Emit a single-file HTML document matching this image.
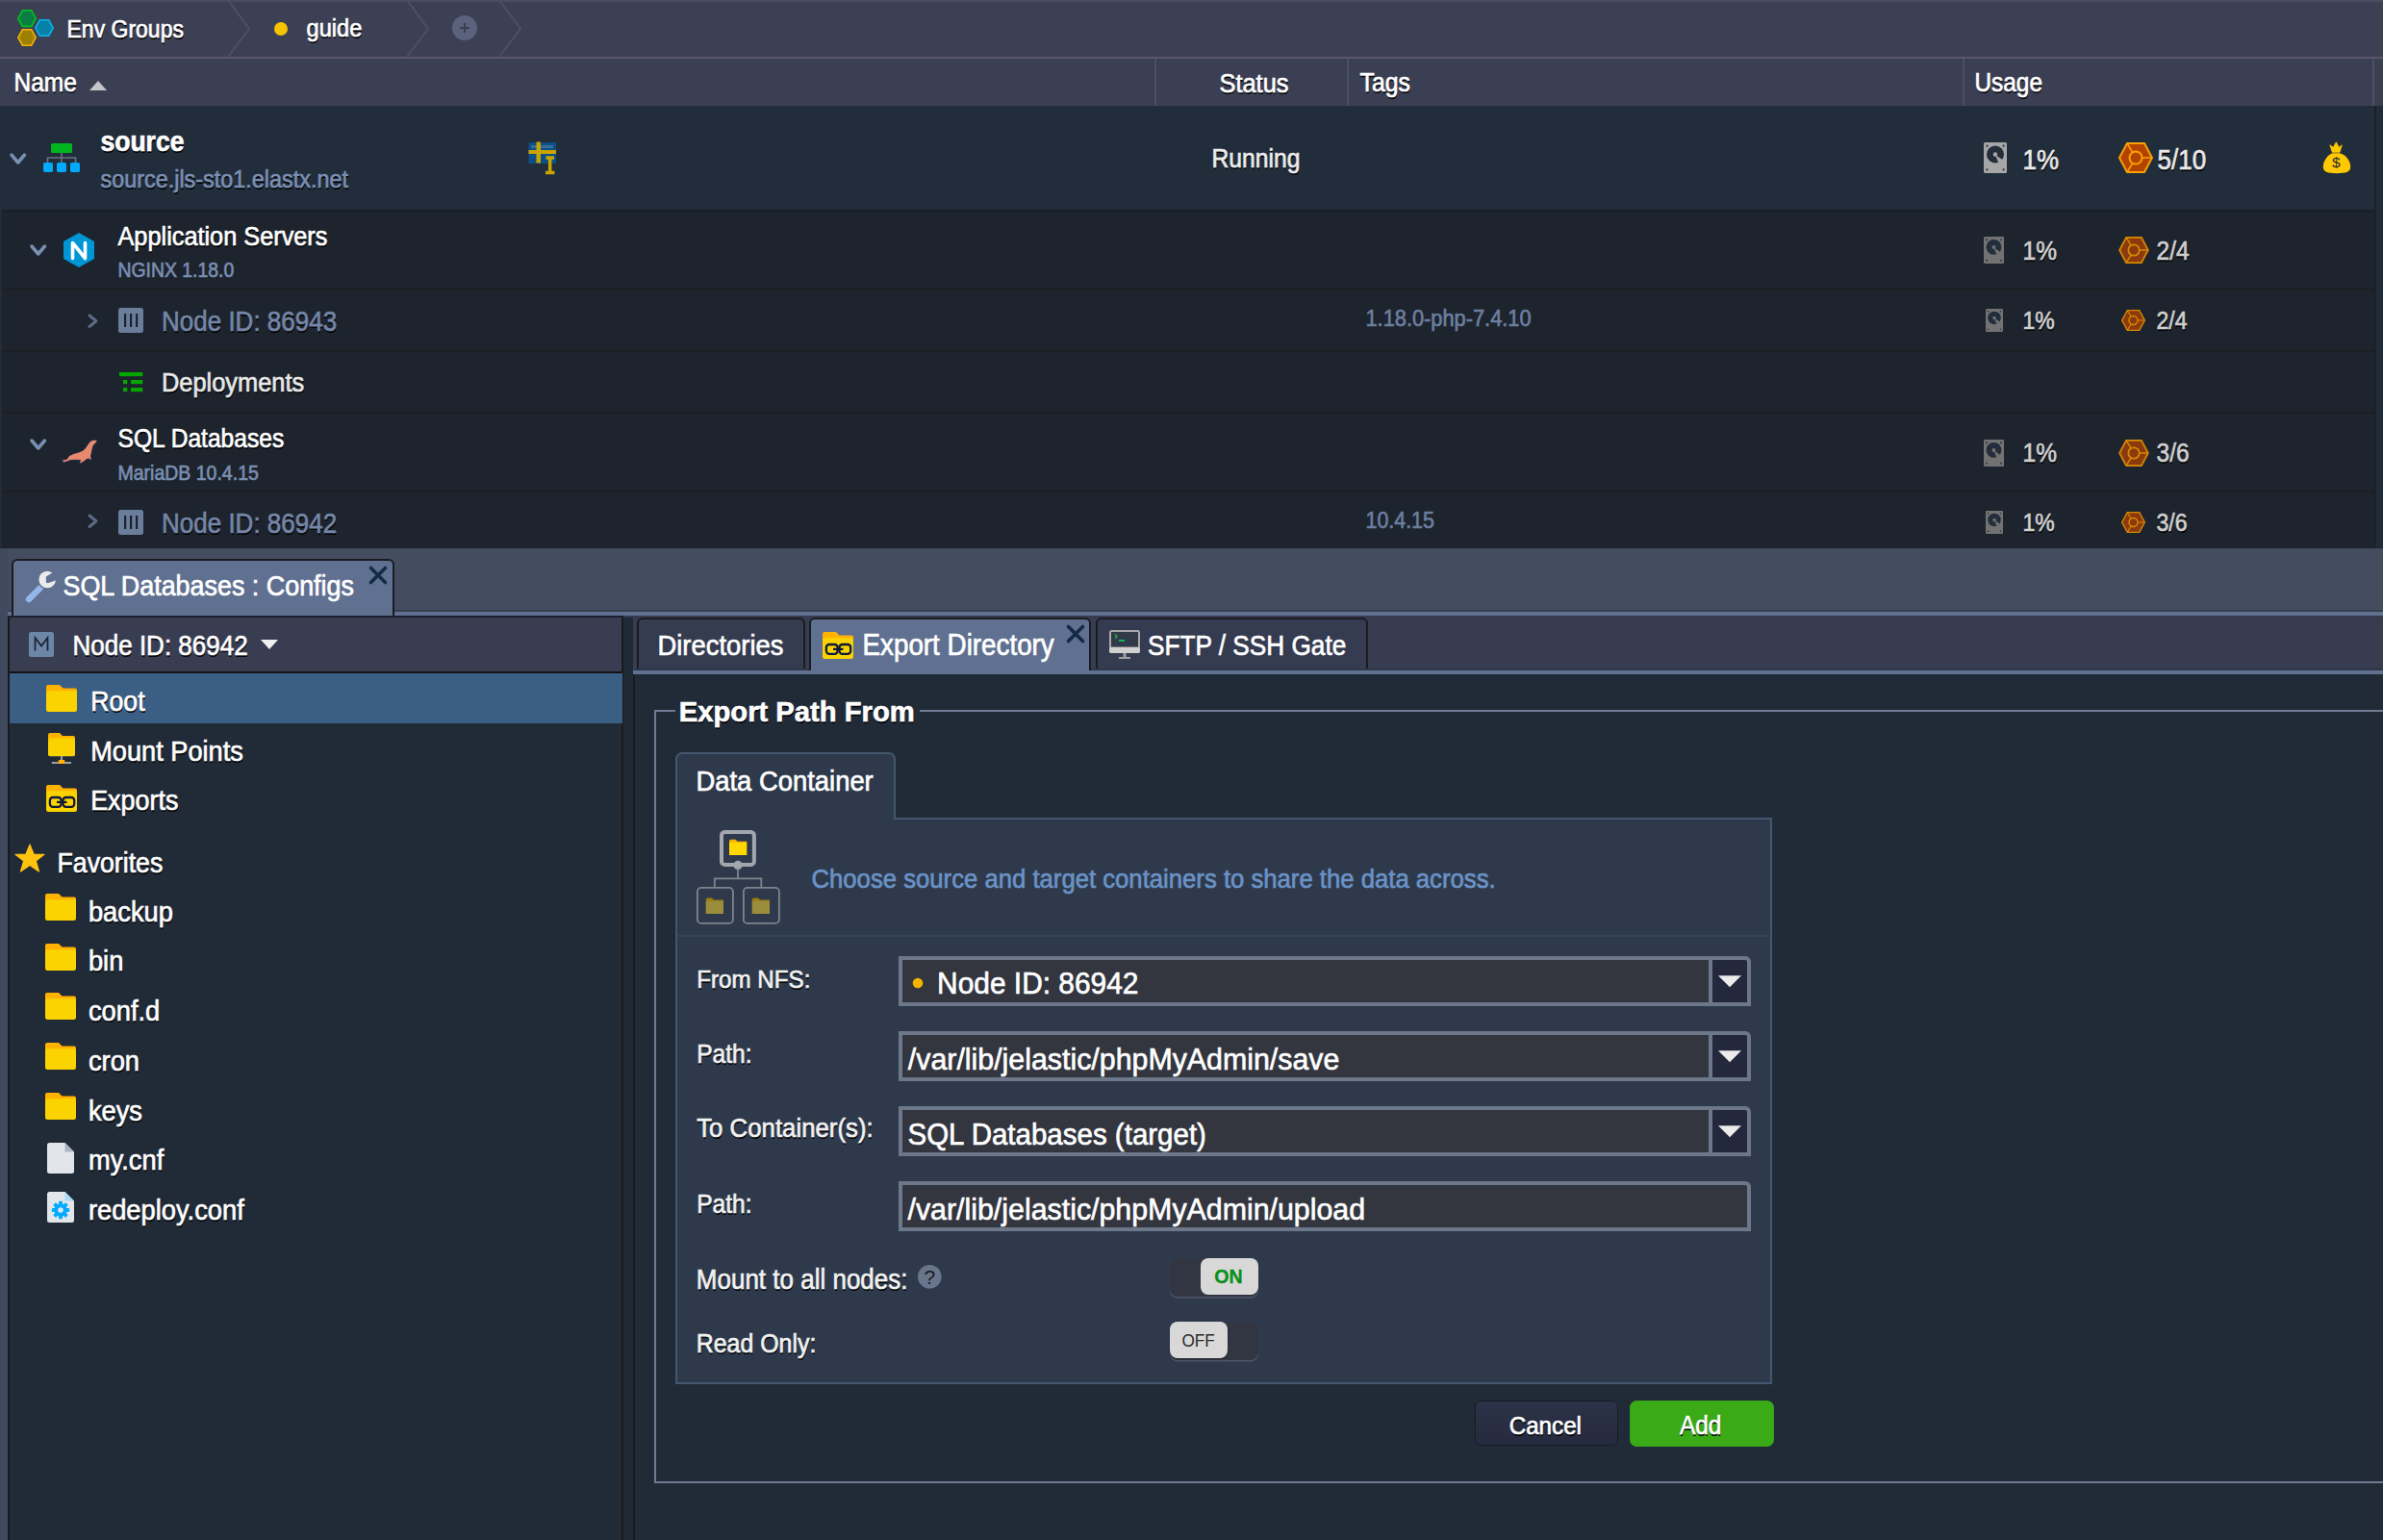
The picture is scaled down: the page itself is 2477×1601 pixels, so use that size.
<!DOCTYPE html>
<html><head><meta charset="utf-8">
<style>
*{box-sizing:border-box;margin:0;padding:0}
html,body{width:2477px;height:1601px;overflow:hidden;background:#212b38;font-family:"Liberation Sans",sans-serif}
.a{position:absolute}
.t{position:absolute;white-space:nowrap;line-height:1;color:#fff;text-shadow:0.5px 2px 0.6px rgba(0,0,0,.9);-webkit-text-stroke:0.6px currentColor}
svg{position:absolute;overflow:visible}
</style></head><body>

<div class="a" style="left:0px;top:0px;width:2477px;height:59px;background:#3c4054;"></div>
<div class="a" style="left:0px;top:0px;width:2477px;height:1.5px;background:#4a4d5f;"></div>
<div class="a" style="left:0px;top:59px;width:2477px;height:2px;background:#5a566b;"></div>
<svg style="left:0px;top:0px" width="2477" height="60" viewBox="0 0 2477 60">
  <polyline points="237,0 259,30 237,59" fill="none" stroke="#4d5064" stroke-width="2"/>
  <polyline points="423,0 445,30 423,59" fill="none" stroke="#4d5064" stroke-width="2"/>
  <polyline points="519,0 541,30 519,59" fill="none" stroke="#4d5064" stroke-width="2"/>
  <polygon points="23.3,10.8 32.7,10.8 37.2,19.2 32.7,27.4 23.3,27.4 18.8,19.2" fill="#0a7d45" stroke="#00c21a" stroke-width="1.6"/>
  <polygon points="41.3,20.8 50.7,20.8 55.2,29 50.7,37.2 41.3,37.2 36.8,29" fill="#0580a6" stroke="#0ab3e8" stroke-width="1.6"/>
  <polygon points="23.3,30.8 32.7,30.8 37.2,39 32.7,47.2 23.3,47.2 18.8,39" fill="#9e8000" stroke="#f5b000" stroke-width="1.6"/>
  <circle cx="292" cy="30" r="7" fill="#f7c200"/>
  <circle cx="483" cy="29" r="13" fill="#5a627c"/>
  <path d="M478,29 H488 M483,24 V34" stroke="#393d50" stroke-width="1.9"/></svg>
<div class="t" style="left:69.5px;top:19.5px;font-size:23px;color:#fff;transform:scaleY(1.1);transform-origin:0 19.47px;">Env Groups</div>
<div class="t" style="left:318.5px;top:18.9px;font-size:23.7px;color:#fff;transform:scaleY(1.1);transform-origin:0 20.06px;">guide</div>
<div class="a" style="left:0px;top:61px;width:2477px;height:49px;background:#3b3f54;"></div>
<div class="a" style="left:1200px;top:61px;width:2px;height:49px;background:#4d5064;"></div>
<div class="a" style="left:1400px;top:61px;width:2px;height:49px;background:#4d5064;"></div>
<div class="a" style="left:2040px;top:61px;width:2px;height:49px;background:#4d5064;"></div>
<div class="a" style="left:2466px;top:61px;width:2px;height:49px;background:#4d5064;"></div>
<div class="t" style="left:14.5px;top:75.3px;font-size:24.5px;color:#fff;transform:scaleY(1.1);transform-origin:0 20.74px;">Name</div>
<svg style="left:90px;top:82px" width="24" height="14" viewBox="0 0 24 14"><polygon points="3,12 12,2 21,12" fill="#c5c6cc"/></svg>
<div class="t" style="left:1267.5px;top:74.5px;font-size:25.4px;color:#fff;transform:scaleY(1.1);transform-origin:0 21.50px;">Status</div>
<div class="t" style="left:1413.5px;top:75.0px;font-size:24.8px;color:#fff;transform:scaleY(1.1);transform-origin:0 20.99px;">Tags</div>
<div class="t" style="left:2052.5px;top:75.3px;font-size:24.4px;color:#fff;transform:scaleY(1.1);transform-origin:0 20.65px;">Usage</div>
<div class="a" style="left:0px;top:110px;width:2477px;height:459px;background:#212c3a;"></div>
<div class="a" style="left:0px;top:110px;width:2468px;height:108px;background:#222d3b;"></div>
<div class="a" style="left:2468px;top:110px;width:2px;height:459px;background:#1c2027;"></div>
<div class="a" style="left:2px;top:218px;width:2466px;height:351px;background:#1d242d;"></div>
<div class="a" style="left:2px;top:218px;width:2466px;height:2px;background:#1b1e23;"></div>
<div class="a" style="left:2px;top:300px;width:2466px;height:2px;background:#1b1e23;"></div>
<div class="a" style="left:2px;top:364px;width:2466px;height:2px;background:#1b1e23;"></div>
<div class="a" style="left:2px;top:428px;width:2466px;height:2px;background:#1b1e23;"></div>
<div class="a" style="left:2px;top:510px;width:2466px;height:2px;background:#1b1e23;"></div>
<svg style="left:9.5px;top:158.5px" width="17.5" height="12" viewBox="0 0 17.5 12"><polyline points="2,2 8.75,10 15.5,2" fill="none" stroke="#7890b2" stroke-width="3.5" stroke-linecap="round" stroke-linejoin="round"/></svg>
<svg style="left:44px;top:148px" width="40" height="32" viewBox="0 0 40 32"><rect x="9" y="1" width="22" height="10" rx="1.5" fill="#00b51f"/>
<path d="M20,11 V21 M5.5,21 V16 H34.5 V21" fill="none" stroke="#6a7280" stroke-width="1.6"/>
<rect x="1" y="21" width="10" height="10" rx="1.8" fill="#00aaff"/><rect x="15" y="21" width="10" height="10" rx="1.8" fill="#00aaff"/><rect x="29" y="21" width="10" height="10" rx="1.8" fill="#00aaff"/></svg>
<div class="t" style="left:104.5px;top:134.6px;font-size:26.5px;color:#fff;font-weight:700;transform:scaleY(1.1);transform-origin:0 22.43px;">source</div>
<div class="t" style="left:104.5px;top:175.7px;font-size:23.4px;color:#7b8fb3;transform:scaleY(1.1);transform-origin:0 19.81px;">source.jls-sto1.elastx.net</div>
<svg style="left:549px;top:147px" width="30" height="34" viewBox="0 0 30 34"><rect x="0.5" y="1" width="28.5" height="22" fill="#0b4f86"/><rect x="3" y="4" width="23" height="3" fill="#4a7aa5" opacity=".7"/>
<rect x="8.5" y="0.5" width="4.5" height="22" fill="#c9a400"/><rect x="0.5" y="9" width="28.5" height="4" fill="#c9a400"/>
<path d="M18.5,17 H27 M22.7,17 V32.5 M18,32.5 H27.5" stroke="#c9a400" stroke-width="3.5" fill="none"/></svg>
<div class="t" style="left:1259.5px;top:154.4px;font-size:24.7px;color:#ececec;transform:scaleY(1.1);transform-origin:0 20.91px;">Running</div>
<svg style="left:2062px;top:148px" width="24" height="32" viewBox="0 0 24 32"><rect x="0" y="0" width="24" height="32" rx="1.5" fill="#a6a6a6"/><circle cx="3.4" cy="3.7" r="1.1" fill="#2a313c"/><circle cx="20.6" cy="3.7" r="1.1" fill="#2a313c"/><circle cx="3.4" cy="28.3" r="1.1" fill="#2a313c"/><circle cx="20.6" cy="28.3" r="1.1" fill="#2a313c"/><circle cx="12" cy="12.5" r="9" fill="#232d3b"/><path d="M12,13 L19.5,18 L15.5,21.8 Z" fill="#a6a6a6"/><circle cx="12" cy="12.6" r="2.3" fill="#a6a6a6"/></svg>
<div class="t" style="left:2102.5px;top:153.5px;font-size:26px;color:#e8e8e8;transform:scaleY(1.1);transform-origin:0 22.01px;">1%</div>
<svg style="left:2202px;top:148px" width="36" height="32" viewBox="0 0 36 32"><polygon points="9,1 27,1 35,16 27,31 9,31 1,16" fill="#b54300" stroke="#f7a200" stroke-width="2"/><circle cx="18" cy="16" r="6.5" fill="none" stroke="#f7a200" stroke-width="2"/><path d="M9,1 L14.8,10.5 M35,16 L24.5,16 M9,31 L14.8,21.5" stroke="#f7a200" stroke-width="1.6"/></svg>
<div class="t" style="left:2242.5px;top:154.0px;font-size:26px;color:#e8e8e8;transform:scaleY(1.1);transform-origin:0 22.01px;">5/10</div>
<svg style="left:2413px;top:147px" width="32" height="34" viewBox="0 0 32 34"><path d="M8.8,3.8 L12.3,6.2 L15.3,0.8 L18.3,6.2 L21.3,3.8 L19,11.3 H11.3 Z" fill="#ffc800" stroke="#ffc800" stroke-width="0.8" stroke-linejoin="round"/>
<path d="M11.5,12.2 H19 C25.5,14 30.2,20 30.2,26.5 C30.2,31.5 26,33.2 16,33.2 C6,33.2 1.8,31.5 1.8,26.5 C1.8,20 6.5,14 11.5,12.2 Z" fill="#ffc800"/>
<text x="15.3" y="27" font-family="Liberation Sans" font-size="15.5" fill="#1f2a38" text-anchor="middle">$</text></svg>
<svg style="left:31.299999999999997px;top:254.3px" width="17.5" height="12" viewBox="0 0 17.5 12"><polyline points="2,2 8.75,10 15.5,2" fill="none" stroke="#7890b2" stroke-width="3.5" stroke-linecap="round" stroke-linejoin="round"/></svg>
<svg style="left:66px;top:242px" width="32" height="36" viewBox="0 0 32 36"><polygon points="16,0 32,9 32,27 16,36 0,27 0,9" fill="#0096d6"/><path d="M9.5,26.5 V10.5 L22.5,26.5 V10.5" fill="none" stroke="#fff" stroke-width="3.6" stroke-linejoin="round" stroke-linecap="round"/></svg>
<div class="t" style="left:122.5px;top:234.1px;font-size:25.3px;color:#fff;transform:scaleY(1.1);transform-origin:0 21.42px;">Application Servers</div>
<div class="t" style="left:122.5px;top:272.1px;font-size:19.4px;color:#7a8eb1;text-shadow:none;transform:scaleY(1.1);transform-origin:0 16.42px;">NGINX 1.18.0</div>
<svg style="left:2062px;top:246px" width="21" height="28" viewBox="0 0 24 32"><rect x="0" y="0" width="24" height="32" rx="1.5" fill="#727272"/><circle cx="3.4" cy="3.7" r="1.1" fill="#2a313c"/><circle cx="20.6" cy="3.7" r="1.1" fill="#2a313c"/><circle cx="3.4" cy="28.3" r="1.1" fill="#2a313c"/><circle cx="20.6" cy="28.3" r="1.1" fill="#2a313c"/><circle cx="12" cy="12.5" r="9" fill="#232d3b"/><path d="M12,13 L19.5,18 L15.5,21.8 Z" fill="#727272"/><circle cx="12" cy="12.6" r="2.3" fill="#727272"/></svg>
<div class="t" style="left:2102.5px;top:249.9px;font-size:24.5px;color:#cfcfcf;transform:scaleY(1.1);transform-origin:0 20.74px;">1%</div>
<svg style="left:2202px;top:246px" width="32" height="28" viewBox="0 0 36 32"><polygon points="9,1 27,1 35,16 27,31 9,31 1,16" fill="#8b3a0e" stroke="#d88a00" stroke-width="2"/><circle cx="18" cy="16" r="6.5" fill="none" stroke="#d88a00" stroke-width="2"/><path d="M9,1 L14.8,10.5 M35,16 L24.5,16 M9,31 L14.8,21.5" stroke="#d88a00" stroke-width="1.6"/></svg>
<div class="t" style="left:2241.5px;top:249.9px;font-size:24.5px;color:#cfcfcf;transform:scaleY(1.1);transform-origin:0 20.74px;">2/4</div>
<svg style="left:90.5px;top:325.5px" width="11" height="15.5" viewBox="0 0 11 15.5"><polyline points="2,2 9,7.75 2,13.5" fill="none" stroke="#5b6b83" stroke-width="3" stroke-linecap="round" stroke-linejoin="round"/></svg>
<svg style="left:123px;top:320px" width="26" height="26" viewBox="0 0 26 26"><rect x="0" y="0" width="26" height="26" rx="2.5" fill="#6a7d9a"/><rect x="6" y="6" width="2.2" height="14" fill="#1b222c"/><rect x="12" y="6" width="2.2" height="14" fill="#1b222c"/><rect x="18" y="6" width="2.2" height="14" fill="#1b222c"/></svg>
<div class="t" style="left:168.0px;top:322.0px;font-size:26px;color:#7586a8;transform:scaleY(1.1);transform-origin:0 22.01px;">Node ID: 86943</div>
<div class="t" style="left:1419.5px;top:321.2px;font-size:21.8px;color:#6c7fa0;text-shadow:none;transform:scaleY(1.1);transform-origin:0 18.45px;">1.18.0-php-7.4.10</div>
<svg style="left:2064px;top:321px" width="18" height="24" viewBox="0 0 24 32"><rect x="0" y="0" width="24" height="32" rx="1.5" fill="#727272"/><circle cx="3.4" cy="3.7" r="1.1" fill="#2a313c"/><circle cx="20.6" cy="3.7" r="1.1" fill="#2a313c"/><circle cx="3.4" cy="28.3" r="1.1" fill="#2a313c"/><circle cx="20.6" cy="28.3" r="1.1" fill="#2a313c"/><circle cx="12" cy="12.5" r="9" fill="#232d3b"/><path d="M12,13 L19.5,18 L15.5,21.8 Z" fill="#727272"/><circle cx="12" cy="12.6" r="2.3" fill="#727272"/></svg>
<div class="t" style="left:2102.5px;top:322.5px;font-size:23px;color:#cfcfcf;transform:scaleY(1.1);transform-origin:0 19.47px;">1%</div>
<svg style="left:2205px;top:321px" width="25" height="24" viewBox="0 0 36 32"><polygon points="9,1 27,1 35,16 27,31 9,31 1,16" fill="#8b3a0e" stroke="#d88a00" stroke-width="2"/><circle cx="18" cy="16" r="6.5" fill="none" stroke="#d88a00" stroke-width="2"/><path d="M9,1 L14.8,10.5 M35,16 L24.5,16 M9,31 L14.8,21.5" stroke="#d88a00" stroke-width="1.6"/></svg>
<div class="t" style="left:2241.5px;top:322.5px;font-size:23px;color:#cfcfcf;transform:scaleY(1.1);transform-origin:0 19.47px;">2/4</div>
<svg style="left:124px;top:387px" width="25" height="20" viewBox="0 0 25 20"><rect x="0" y="0" width="24.3" height="4.2" fill="#03a700"/><rect x="4" y="8" width="4.2" height="4.2" fill="#03a700"/><rect x="12" y="8" width="12.3" height="4.2" fill="#03a700"/><rect x="4" y="16" width="4.2" height="4.2" fill="#03a700"/><rect x="12" y="16" width="12.3" height="4.2" fill="#03a700"/></svg>
<div class="t" style="left:168.0px;top:386.3px;font-size:25.4px;color:#e8e8e8;transform:scaleY(1.1);transform-origin:0 21.50px;">Deployments</div>
<svg style="left:31.299999999999997px;top:456.3px" width="17.5" height="12" viewBox="0 0 17.5 12"><polyline points="2,2 8.75,10 15.5,2" fill="none" stroke="#7890b2" stroke-width="3.5" stroke-linecap="round" stroke-linejoin="round"/></svg>
<svg style="left:62px;top:456px" width="40" height="28" viewBox="0 0 40 28"><path d="M39.4,1.7 C36,0.5 33,1.5 31,3.5 C29,6 27,10 24.5,12 C21,14.5 14,15 10.5,17.5 C9,18.5 8.5,20 7.5,21.2 L0.8,22.6 L4,23.8 L1.2,25.3 C5,25 8,24 10.5,22.8 C14,22 18,22.2 21.5,22.5 L20.3,26.3 C23,25.5 26,23.5 28,21.5 L30.5,21 L33,23 C33.5,21 32.5,19.5 32.5,18 C33.5,14 34,10 35,7.5 C36.5,5.5 38.5,4 39.4,1.7 Z" fill="#e8896e" stroke="#0b1f4a" stroke-width="0.8"/></svg>
<div class="t" style="left:122.5px;top:444.7px;font-size:24.6px;color:#fff;transform:scaleY(1.1);transform-origin:0 20.82px;">SQL Databases</div>
<div class="t" style="left:122.5px;top:482.5px;font-size:19.5px;color:#7a8eb1;text-shadow:none;transform:scaleY(1.1);transform-origin:0 16.51px;">MariaDB 10.4.15</div>
<svg style="left:2062px;top:457px" width="21" height="28" viewBox="0 0 24 32"><rect x="0" y="0" width="24" height="32" rx="1.5" fill="#727272"/><circle cx="3.4" cy="3.7" r="1.1" fill="#2a313c"/><circle cx="20.6" cy="3.7" r="1.1" fill="#2a313c"/><circle cx="3.4" cy="28.3" r="1.1" fill="#2a313c"/><circle cx="20.6" cy="28.3" r="1.1" fill="#2a313c"/><circle cx="12" cy="12.5" r="9" fill="#232d3b"/><path d="M12,13 L19.5,18 L15.5,21.8 Z" fill="#727272"/><circle cx="12" cy="12.6" r="2.3" fill="#727272"/></svg>
<div class="t" style="left:2102.5px;top:460.3px;font-size:24.5px;color:#cfcfcf;transform:scaleY(1.1);transform-origin:0 20.74px;">1%</div>
<svg style="left:2202px;top:457px" width="32" height="28" viewBox="0 0 36 32"><polygon points="9,1 27,1 35,16 27,31 9,31 1,16" fill="#8b3a0e" stroke="#d88a00" stroke-width="2"/><circle cx="18" cy="16" r="6.5" fill="none" stroke="#d88a00" stroke-width="2"/><path d="M9,1 L14.8,10.5 M35,16 L24.5,16 M9,31 L14.8,21.5" stroke="#d88a00" stroke-width="1.6"/></svg>
<div class="t" style="left:2241.5px;top:460.3px;font-size:24.5px;color:#cfcfcf;transform:scaleY(1.1);transform-origin:0 20.74px;">3/6</div>
<svg style="left:90.5px;top:533.5px" width="11" height="15.5" viewBox="0 0 11 15.5"><polyline points="2,2 9,7.75 2,13.5" fill="none" stroke="#5b6b83" stroke-width="3" stroke-linecap="round" stroke-linejoin="round"/></svg>
<svg style="left:123px;top:530px" width="26" height="26" viewBox="0 0 26 26"><rect x="0" y="0" width="26" height="26" rx="2.5" fill="#6a7d9a"/><rect x="6" y="6" width="2.2" height="14" fill="#1b222c"/><rect x="12" y="6" width="2.2" height="14" fill="#1b222c"/><rect x="18" y="6" width="2.2" height="14" fill="#1b222c"/></svg>
<div class="t" style="left:168.0px;top:532.0px;font-size:26px;color:#7586a8;transform:scaleY(1.1);transform-origin:0 22.01px;">Node ID: 86942</div>
<div class="t" style="left:1419.5px;top:531.9px;font-size:21.4px;color:#6c7fa0;text-shadow:none;transform:scaleY(1.1);transform-origin:0 18.12px;">10.4.15</div>
<svg style="left:2064px;top:531px" width="18" height="24" viewBox="0 0 24 32"><rect x="0" y="0" width="24" height="32" rx="1.5" fill="#727272"/><circle cx="3.4" cy="3.7" r="1.1" fill="#2a313c"/><circle cx="20.6" cy="3.7" r="1.1" fill="#2a313c"/><circle cx="3.4" cy="28.3" r="1.1" fill="#2a313c"/><circle cx="20.6" cy="28.3" r="1.1" fill="#2a313c"/><circle cx="12" cy="12.5" r="9" fill="#232d3b"/><path d="M12,13 L19.5,18 L15.5,21.8 Z" fill="#727272"/><circle cx="12" cy="12.6" r="2.3" fill="#727272"/></svg>
<div class="t" style="left:2102.5px;top:532.5px;font-size:23px;color:#cfcfcf;transform:scaleY(1.1);transform-origin:0 19.47px;">1%</div>
<svg style="left:2205px;top:531px" width="25" height="24" viewBox="0 0 36 32"><polygon points="9,1 27,1 35,16 27,31 9,31 1,16" fill="#8b3a0e" stroke="#d88a00" stroke-width="2"/><circle cx="18" cy="16" r="6.5" fill="none" stroke="#d88a00" stroke-width="2"/><path d="M9,1 L14.8,10.5 M35,16 L24.5,16 M9,31 L14.8,21.5" stroke="#d88a00" stroke-width="1.6"/></svg>
<div class="t" style="left:2241.5px;top:532.5px;font-size:23px;color:#cfcfcf;transform:scaleY(1.1);transform-origin:0 19.47px;">3/6</div>
<div class="a" style="left:0px;top:568.5px;width:2477px;height:2.5px;background:#21202e;"></div>
<div class="a" style="left:0px;top:570px;width:2477px;height:64px;background:#444d60;"></div>
<div class="a" style="left:0px;top:570px;width:2477px;height:1033px;background:#3f4a5e;z-index:-1"></div>
<div class="a" style="left:0px;top:570px;width:8px;height:1031px;background:#3f4a5e;"></div>
<div class="a" style="left:8px;top:634px;width:2469px;height:2px;background:#36404f;"></div>
<div class="a" style="left:8px;top:636px;width:2469px;height:4px;background:#607090;"></div>
<div class="a" style="left:8px;top:640px;width:640px;height:2px;background:#1e2030;"></div>
<div class="a" style="left:648px;top:640px;width:1829px;height:1.5px;background:#353b4f;"></div>
<div class="a" style="left:12px;top:581px;width:398px;height:59px;background:#607090;border:2px solid #1a1c20;border-bottom:none;border-radius:6px 6px 0 0"></div>
<svg style="left:20px;top:585px" width="45" height="45" viewBox="0 0 45 45"><path d="M10,38 L21.5,26.5" stroke="#94b6ea" stroke-width="6.5" stroke-linecap="round"/>
<circle cx="29.2" cy="17.5" r="10.4" fill="#607090"/>
<circle cx="29.2" cy="17.5" r="8.8" fill="#ebebeb"/><polygon points="27.8,14.6 35.5,9.8 42,9.5 42,17 29.6,21.2 27.8,20.4" fill="#607090"/></svg>
<div class="t" style="left:65.5px;top:597.2px;font-size:26.9px;color:#fff;text-shadow:none;transform:scaleY(1.1);transform-origin:0 22.77px;">SQL Databases : Configs</div>
<svg style="left:383px;top:588px" width="20" height="20" viewBox="0 0 20 20"><path d="M2.5,2.5 L17.5,17.5 M17.5,2.5 L2.5,17.5" stroke="#142b47" stroke-width="3.6" stroke-linecap="round"/></svg>
<div class="a" style="left:8px;top:642px;width:640px;height:959px;background:#212b38;"></div>
<div class="a" style="left:8px;top:642px;width:2px;height:959px;background:#18191d;"></div>
<div class="a" style="left:646px;top:642px;width:2px;height:959px;background:#1a1a1c;"></div>
<div class="a" style="left:10px;top:642px;width:636px;height:56px;background:#393d52;"></div>
<div class="a" style="left:10px;top:698px;width:636px;height:2px;background:#141414;"></div>
<svg style="left:30px;top:657px" width="26" height="26" viewBox="0 0 26 26"><rect x="0" y="0" width="26" height="26" rx="2.5" fill="#6c86a6"/><path d="M6.5,19.5 V6 L13,14.5 L19.5,6 V19.5" fill="none" stroke="#1a2230" stroke-width="1.7"/></svg>
<div class="t" style="left:75.5px;top:659.0px;font-size:26px;color:#fff;transform:scaleY(1.1);transform-origin:0 22.01px;">Node ID: 86942</div>
<svg style="left:270px;top:664px" width="20" height="12" viewBox="0 0 20 12"><polygon points="1,1 19,1 10,11" fill="#f0f0f0"/></svg>
<div class="a" style="left:10px;top:700px;width:637px;height:52px;background:#3a5e84;"></div>
<svg style="left:48px;top:712px" width="32" height="28" viewBox="0 0 32 28"><path d="M0,2 Q0,0 2,0 H14 L17.5,3.5 H30 Q32,3.5 32,5.5 V8 H0 Z" fill="#ffb200"/><rect x="0" y="6.3" width="32" height="21.7" rx="2.2" fill="#fad300"/></svg>
<div class="t" style="left:94.2px;top:716.9px;font-size:26.7px;color:#fff;transform:scaleY(1.1);transform-origin:0 22.60px;">Root</div>
<svg style="left:50px;top:762px" width="28" height="33" viewBox="0 0 28 33"><path d="M0,2 Q0,0 2,0 H12 L15,3 H26 Q28,3 28,5 V7 H0 Z" fill="#ffb200"/><rect x="0" y="5.5" width="28" height="18.7" rx="2" fill="#fad300"/><rect x="13" y="24" width="2" height="5" fill="#a0a0a0"/><rect x="3.8" y="30" width="20.2" height="2" fill="#a0a0a0"/><rect x="10.8" y="28" width="6.4" height="4" fill="#ffb200"/></svg>
<div class="t" style="left:94.2px;top:767.7px;font-size:27.2px;color:#fff;transform:scaleY(1.1);transform-origin:0 23.02px;">Mount Points</div>
<svg style="left:48px;top:816px" width="32" height="28" viewBox="0 0 32 28"><path d="M0,2 Q0,0 2,0 H14 L17.5,3.5 H30 Q32,3.5 32,5.5 V8 H0 Z" fill="#ffb200"/><rect x="0" y="6.3" width="32" height="21.7" rx="2.2" fill="#fad300"/><rect x="3.9" y="13" width="11.7" height="9.8" rx="3" fill="none" stroke="#0e1a3a" stroke-width="2.3"/><rect x="17.5" y="13" width="11.7" height="9.8" rx="3" fill="none" stroke="#0e1a3a" stroke-width="2.3"/><path d="M11,17.9 H21.5" stroke="#0e1a3a" stroke-width="2.2"/></svg>
<div class="t" style="left:94.2px;top:819.7px;font-size:26.9px;color:#fff;transform:scaleY(1.1);transform-origin:0 22.77px;">Exports</div>
<svg style="left:15px;top:877px" width="32" height="30" viewBox="0 0 32 30"><polygon points="16,1 20,11 31,11.3 22.3,18 25.5,29 16,22.6 6.5,29 9.7,18 1,11.3 12,11" fill="#ffc20e" stroke="#ffc20e" stroke-width="1.2" stroke-linejoin="round"/></svg>
<div class="t" style="left:59.5px;top:885.4px;font-size:26.7px;color:#fff;transform:scaleY(1.1);transform-origin:0 22.60px;">Favorites</div>
<svg style="left:47px;top:928.8px" width="32" height="28" viewBox="0 0 32 28"><path d="M0,2 Q0,0 2,0 H14 L17.5,3.5 H30 Q32,3.5 32,5.5 V8 H0 Z" fill="#ffb200"/><rect x="0" y="6.3" width="32" height="21.7" rx="2.2" fill="#fad300"/></svg>
<div class="t" style="left:91.9px;top:934.7px;font-size:27.3px;color:#fff;transform:scaleY(1.1);transform-origin:0 23.11px;">backup</div>
<svg style="left:47px;top:980.5px" width="32" height="28" viewBox="0 0 32 28"><path d="M0,2 Q0,0 2,0 H14 L17.5,3.5 H30 Q32,3.5 32,5.5 V8 H0 Z" fill="#ffb200"/><rect x="0" y="6.3" width="32" height="21.7" rx="2.2" fill="#fad300"/></svg>
<div class="t" style="left:91.9px;top:986.4px;font-size:27.3px;color:#fff;transform:scaleY(1.1);transform-origin:0 23.11px;">bin</div>
<svg style="left:47px;top:1032.3px" width="32" height="28" viewBox="0 0 32 28"><path d="M0,2 Q0,0 2,0 H14 L17.5,3.5 H30 Q32,3.5 32,5.5 V8 H0 Z" fill="#ffb200"/><rect x="0" y="6.3" width="32" height="21.7" rx="2.2" fill="#fad300"/></svg>
<div class="t" style="left:91.9px;top:1038.2px;font-size:27.3px;color:#fff;transform:scaleY(1.1);transform-origin:0 23.11px;">conf.d</div>
<svg style="left:47px;top:1084.0px" width="32" height="28" viewBox="0 0 32 28"><path d="M0,2 Q0,0 2,0 H14 L17.5,3.5 H30 Q32,3.5 32,5.5 V8 H0 Z" fill="#ffb200"/><rect x="0" y="6.3" width="32" height="21.7" rx="2.2" fill="#fad300"/></svg>
<div class="t" style="left:91.9px;top:1089.9px;font-size:27.3px;color:#fff;transform:scaleY(1.1);transform-origin:0 23.11px;">cron</div>
<svg style="left:47px;top:1135.8px" width="32" height="28" viewBox="0 0 32 28"><path d="M0,2 Q0,0 2,0 H14 L17.5,3.5 H30 Q32,3.5 32,5.5 V8 H0 Z" fill="#ffb200"/><rect x="0" y="6.3" width="32" height="21.7" rx="2.2" fill="#fad300"/></svg>
<div class="t" style="left:91.9px;top:1141.7px;font-size:27.3px;color:#fff;transform:scaleY(1.1);transform-origin:0 23.11px;">keys</div>
<svg style="left:49px;top:1187.5px" width="28" height="32" viewBox="0 0 28 32"><path d="M0,2.5 Q0,0 2.5,0 H18.5 L28,9.5 V29.5 Q28,32 25.5,32 H2.5 Q0,32 0,29.5 Z" fill="#e2e6eb"/><path d="M18.5,0 L28,9.5 H18.5 Z" fill="#adb3c6"/></svg>
<div class="t" style="left:91.9px;top:1193.4px;font-size:27.3px;color:#fff;transform:scaleY(1.1);transform-origin:0 23.11px;">my.cnf</div>
<svg style="left:49px;top:1239.3px" width="28" height="32" viewBox="0 0 28 32"><path d="M0,2.5 Q0,0 2.5,0 H18.5 L28,9.5 V29.5 Q28,32 25.5,32 H2.5 Q0,32 0,29.5 Z" fill="#e2e6eb"/><path d="M18.5,0 L28,9.5 H18.5 Z" fill="#aadcf8"/><g transform="translate(14,19)"><circle r="6.6" fill="#00aaff"/><g fill="#00aaff"><rect x="-2" y="-9.2" width="4" height="4" rx="1"/><rect x="-2" y="5.2" width="4" height="4" rx="1"/><rect x="-9.2" y="-2" width="4" height="4" rx="1"/><rect x="5.2" y="-2" width="4" height="4" rx="1"/><g transform="rotate(45)"><rect x="-2" y="-9.2" width="4" height="4" rx="1"/><rect x="-2" y="5.2" width="4" height="4" rx="1"/><rect x="-9.2" y="-2" width="4" height="4" rx="1"/><rect x="5.2" y="-2" width="4" height="4" rx="1"/></g></g><circle r="2.8" fill="#e2e6eb"/></g></svg>
<div class="t" style="left:91.9px;top:1245.2px;font-size:27.3px;color:#fff;transform:scaleY(1.1);transform-origin:0 23.11px;">redeploy.conf</div>
<div class="a" style="left:648px;top:642px;width:10px;height:959px;background:#202a36;"></div>
<div class="a" style="left:658px;top:641px;width:1819px;height:56px;background:#373c50;"></div>
<div class="a" style="left:658px;top:701px;width:1819px;height:900px;background:#212b38;"></div>
<div class="a" style="left:658px;top:701px;width:2px;height:900px;background:#1a1b1e;"></div>
<div class="a" style="left:662px;top:642px;width:175px;height:55px;background:#363c50;border:2px solid #1a1c20;border-bottom:none;border-radius:6px 6px 0 0"></div>
<div class="t" style="left:683.5px;top:658.4px;font-size:27.4px;color:#fff;text-shadow:none;transform:scaleY(1.1);transform-origin:0 23.19px;">Directories</div>
<div class="a" style="left:841px;top:642px;width:293px;height:55px;background:#607090;border:2px solid #1a1c20;border-bottom:none;border-radius:6px 6px 0 0"></div>
<svg style="left:855px;top:657px" width="32" height="28" viewBox="0 0 32 28"><path d="M0,2 Q0,0 2,0 H14 L17.5,3.5 H30 Q32,3.5 32,5.5 V8 H0 Z" fill="#ffb200"/><rect x="0" y="6.3" width="32" height="21.7" rx="2.2" fill="#fad300"/><rect x="3.9" y="13" width="11.7" height="9.8" rx="3" fill="none" stroke="#0e1a3a" stroke-width="2.3"/><rect x="17.5" y="13" width="11.7" height="9.8" rx="3" fill="none" stroke="#0e1a3a" stroke-width="2.3"/><path d="M11,17.9 H21.5" stroke="#0e1a3a" stroke-width="2.2"/></svg>
<div class="t" style="left:896.5px;top:657.5px;font-size:27.8px;color:#fff;text-shadow:none;transform:scaleY(1.1);transform-origin:0 23.53px;">Export Directory</div>
<svg style="left:1108px;top:649px" width="20" height="20" viewBox="0 0 20 20"><path d="M2.5,2.5 L17.5,17.5 M17.5,2.5 L2.5,17.5" stroke="#142b47" stroke-width="3.8" stroke-linecap="round"/></svg>
<div class="a" style="left:1139px;top:642px;width:283px;height:55px;background:#353b50;border:2px solid #1a1c20;border-bottom:none;border-radius:6px 6px 0 0"></div>
<svg style="left:1153px;top:655px" width="32" height="30" viewBox="0 0 32 30"><rect x="0" y="0" width="32" height="24" rx="2.5" fill="#a9a9a9"/><rect x="2" y="2" width="28" height="15.5" fill="#323a4a"/><rect x="0" y="18" width="32" height="6" rx="2" fill="#d0d0d0"/><rect x="14.5" y="24" width="3" height="4" fill="#a0a0a0"/><rect x="10" y="28" width="12" height="2" fill="#a0a0a0"/><path d="M6,4.5 L8,6.5 L6,8.5" fill="none" stroke="#16c150" stroke-width="1.2"/><rect x="10" y="10" width="6" height="1.8" fill="#16c150"/></svg>
<div class="t" style="left:1193.1px;top:658.8px;font-size:26.2px;color:#fff;text-shadow:none;transform:scaleY(1.1);transform-origin:0 22.18px;">SFTP / SSH Gate</div>
<div class="a" style="left:660px;top:695px;width:181px;height:2px;background:#2e3749;"></div>
<div class="a" style="left:1134px;top:695px;width:1343px;height:2px;background:#2e3749;"></div>
<div class="a" style="left:658px;top:697px;width:1819px;height:4px;background:#607090;"></div>
<div class="a" style="left:680px;top:738px;width:22px;height:2px;background:#6e7b92;"></div>
<div class="a" style="left:956px;top:738px;width:1521px;height:2px;background:#6e7b92;"></div>
<div class="a" style="left:680px;top:738px;width:2px;height:803px;background:#6e7b92;"></div>
<div class="a" style="left:680px;top:1540px;width:1797px;height:2px;background:#6e7b92;"></div>
<div class="t" style="left:705.8px;top:725.8px;font-size:29.2px;color:#fff;font-weight:700;">Export Path From</div>
<div class="a" style="left:702px;top:850px;width:1140px;height:589px;background:#2e3a4c;border:2px solid #42576f"></div>
<div class="a" style="left:702px;top:782px;width:229px;height:70px;background:#2e3a4c;border:2px solid #42576f;border-bottom:none;border-radius:7px 7px 0 0"></div>
<div class="t" style="left:723.5px;top:799.4px;font-size:27.4px;color:#fff;text-shadow:none;transform:scaleY(1.1);transform-origin:0 23.19px;">Data Container</div>
<div class="a" style="left:704px;top:971.6px;width:1135px;height:2.4px;background:#34455a;"></div>
<svg style="left:724px;top:862px" width="87" height="100" viewBox="0 0 87 100"><rect x="26" y="2.9" width="33.9" height="34" rx="3.5" fill="none" stroke="#a3a7ad" stroke-width="4"/>
<path d="M34,12.7 Q34,10.7 36,10.7 H40.5 L42.5,12.7 H52.2 V27 H34 Z" fill="#ffb400"/><rect x="34" y="14" width="18.2" height="13" fill="#ffd800"/>
<circle cx="43" cy="37.5" r="4.7" fill="#a3a7ad"/>
<path d="M43,41 V51.3 M18.8,60.9 V51.3 H67.3 V60.9" fill="none" stroke="#7d848c" stroke-width="1.8"/>
<rect x="0.9" y="60.9" width="37" height="37" rx="4" fill="none" stroke="#7d848c" stroke-width="1.8"/>
<rect x="48.9" y="60.9" width="37" height="37" rx="4" fill="none" stroke="#7d848c" stroke-width="1.8"/>
<path d="M9.8,73.6 Q9.8,71.6 11.8,71.6 H16 L18,73.6 H28 V88 H9.8 Z" fill="#9c7f10"/><rect x="9.8" y="74.8" width="18.2" height="13.2" fill="#9c8d3c"/>
<path d="M57.8,73.6 Q57.8,71.6 59.8,71.6 H64 L66,73.6 H76 V88 H57.8 Z" fill="#9c7f10"/><rect x="57.8" y="74.8" width="18.2" height="13.2" fill="#9c8d3c"/></svg>
<div class="t" style="left:843.5px;top:902.2px;font-size:25.7px;color:#6b93c7;text-shadow:none;transform:scaleY(1.1);transform-origin:0 21.76px;">Choose source and target containers to share the data across.</div>
<div class="t" style="left:724.2px;top:1007.1px;font-size:24.2px;color:#f2f2f2;transform:scaleY(1.1);transform-origin:0 20.49px;">From NFS:</div>
<div class="t" style="left:724.2px;top:1084.8px;font-size:24.6px;color:#f2f2f2;transform:scaleY(1.1);transform-origin:0 20.82px;">Path:</div>
<div class="t" style="left:724.2px;top:1161.4px;font-size:25.8px;color:#f2f2f2;transform:scaleY(1.1);transform-origin:0 21.84px;">To Container(s):</div>
<div class="t" style="left:724.2px;top:1240.9px;font-size:24.6px;color:#f2f2f2;transform:scaleY(1.1);transform-origin:0 20.82px;">Path:</div>
<div class="a" style="left:934px;top:994px;width:886px;height:52px;background:#33363f;border:4px solid #6d778a;border-radius:0 6px 0 0"></div>
<div class="a" style="left:1776px;top:994px;width:4px;height:52px;background:#6d778a;"></div>
<div class="a" style="left:1780px;top:998px;width:36px;height:44px;background:#23283c;border-radius:0 3px 0 0"></div>
<svg style="left:1786px;top:1013.5px" width="24" height="13" viewBox="0 0 24 13"><polygon points="0,0.3 24,0.3 12,12.2" fill="#ececec"/></svg>
<div class="a" style="left:934px;top:1072px;width:886px;height:52px;background:#33363f;border:4px solid #6d778a;border-radius:0 6px 0 0"></div>
<div class="a" style="left:1776px;top:1072px;width:4px;height:52px;background:#6d778a;"></div>
<div class="a" style="left:1780px;top:1076px;width:36px;height:44px;background:#23283c;border-radius:0 3px 0 0"></div>
<svg style="left:1786px;top:1091.5px" width="24" height="13" viewBox="0 0 24 13"><polygon points="0,0.3 24,0.3 12,12.2" fill="#ececec"/></svg>
<div class="a" style="left:934px;top:1150px;width:886px;height:52px;background:#33363f;border:4px solid #6d778a;border-radius:0 6px 0 0"></div>
<div class="a" style="left:1776px;top:1150px;width:4px;height:52px;background:#6d778a;"></div>
<div class="a" style="left:1780px;top:1154px;width:36px;height:44px;background:#23283c;border-radius:0 3px 0 0"></div>
<svg style="left:1786px;top:1169.5px" width="24" height="13" viewBox="0 0 24 13"><polygon points="0,0.3 24,0.3 12,12.2" fill="#ececec"/></svg>
<div class="a" style="left:934px;top:1228px;width:886px;height:52px;background:#33363f;border:4px solid #6d778a;border-radius:0 6px 0 0"></div>
<svg style="left:948px;top:1016px" width="12" height="12" viewBox="0 0 12 12"><circle cx="6" cy="6" r="5.3" fill="#f5b400"/></svg>
<div class="t" style="left:974.1px;top:1008.4px;font-size:29.9px;color:#fff;text-shadow:none;transform:scaleY(1.06);transform-origin:0 25.31px;">Node ID: 86942</div>
<div class="t" style="left:943.8px;top:1086.5px;font-size:30.35px;color:#fff;text-shadow:none;transform:scaleY(1.06);transform-origin:0 25.69px;">/var/lib/jelastic/phpMyAdmin/save</div>
<div class="t" style="left:943.5px;top:1165.0px;font-size:29.5px;color:#fff;text-shadow:none;transform:scaleY(1.06);transform-origin:0 24.97px;">SQL Databases (target)</div>
<div class="t" style="left:943.5px;top:1242.5px;font-size:30.35px;color:#fff;text-shadow:none;transform:scaleY(1.06);transform-origin:0 25.69px;">/var/lib/jelastic/phpMyAdmin/upload</div>
<div class="t" style="left:723.8px;top:1318.4px;font-size:26px;color:#f2f2f2;transform:scaleY(1.1);transform-origin:0 22.01px;">Mount to all nodes:</div>
<svg style="left:953.9px;top:1314.6px" width="25" height="25" viewBox="0 0 25 25"><circle cx="12.3" cy="12.3" r="12.3" fill="#68758d"/><text x="12.3" y="20" font-family="Liberation Sans" font-size="21" fill="#1a1a1a" text-anchor="middle">?</text></svg>
<div class="a" style="left:1216px;top:1308px;width:92px;height:40px;background:#323643;border-radius:8px;box-shadow:0 1.5px 0 #4e5666"></div>
<div class="a" style="left:1248px;top:1308px;width:60px;height:38px;background:#d8d8d8;border-radius:8px"></div>
<div class="t" style="left:1262.2px;top:1318.0px;font-size:19.6px;color:#07901a;font-weight:700;text-shadow:none;-webkit-text-stroke:0.3px currentColor;">ON</div>
<div class="t" style="left:723.8px;top:1384.9px;font-size:24.9px;color:#f2f2f2;transform:scaleY(1.1);transform-origin:0 21.08px;">Read Only:</div>
<div class="a" style="left:1216px;top:1374.4px;width:92px;height:39.3px;background:#323643;border-radius:8px;box-shadow:0 1.5px 0 #4e5666"></div>
<div class="a" style="left:1216px;top:1374.4px;width:60px;height:37.6px;background:#d8d8d8;border-radius:8px;box-shadow:0 1px 2px rgba(0,0,0,.4)"></div>
<div class="t" style="left:1228.4px;top:1386.0px;font-size:17.2px;color:#2a2a2a;text-shadow:none;-webkit-text-stroke:0;transform:scaleY(1.05);transform-origin:0 14.56px;">OFF</div>
<div class="a" style="left:1532.6px;top:1456.4px;width:149px;height:47px;background:linear-gradient(#2c3248,#262a3e);border:1.5px solid #1c1b26;border-radius:6px"></div>
<div class="t" style="left:1568.7px;top:1470.9px;font-size:24.2px;color:#fff;transform:scaleY(1.1);transform-origin:0 20.49px;">Cancel</div>
<div class="a" style="left:1693.8px;top:1456px;width:150px;height:48px;background:#3aaa17;border:1.5px solid #36a017;border-radius:7px"></div>
<div class="t" style="left:1746.0px;top:1470.7px;font-size:24.4px;color:#fff;transform:scaleY(1.1);transform-origin:0 20.65px;">Add</div>
</body></html>
